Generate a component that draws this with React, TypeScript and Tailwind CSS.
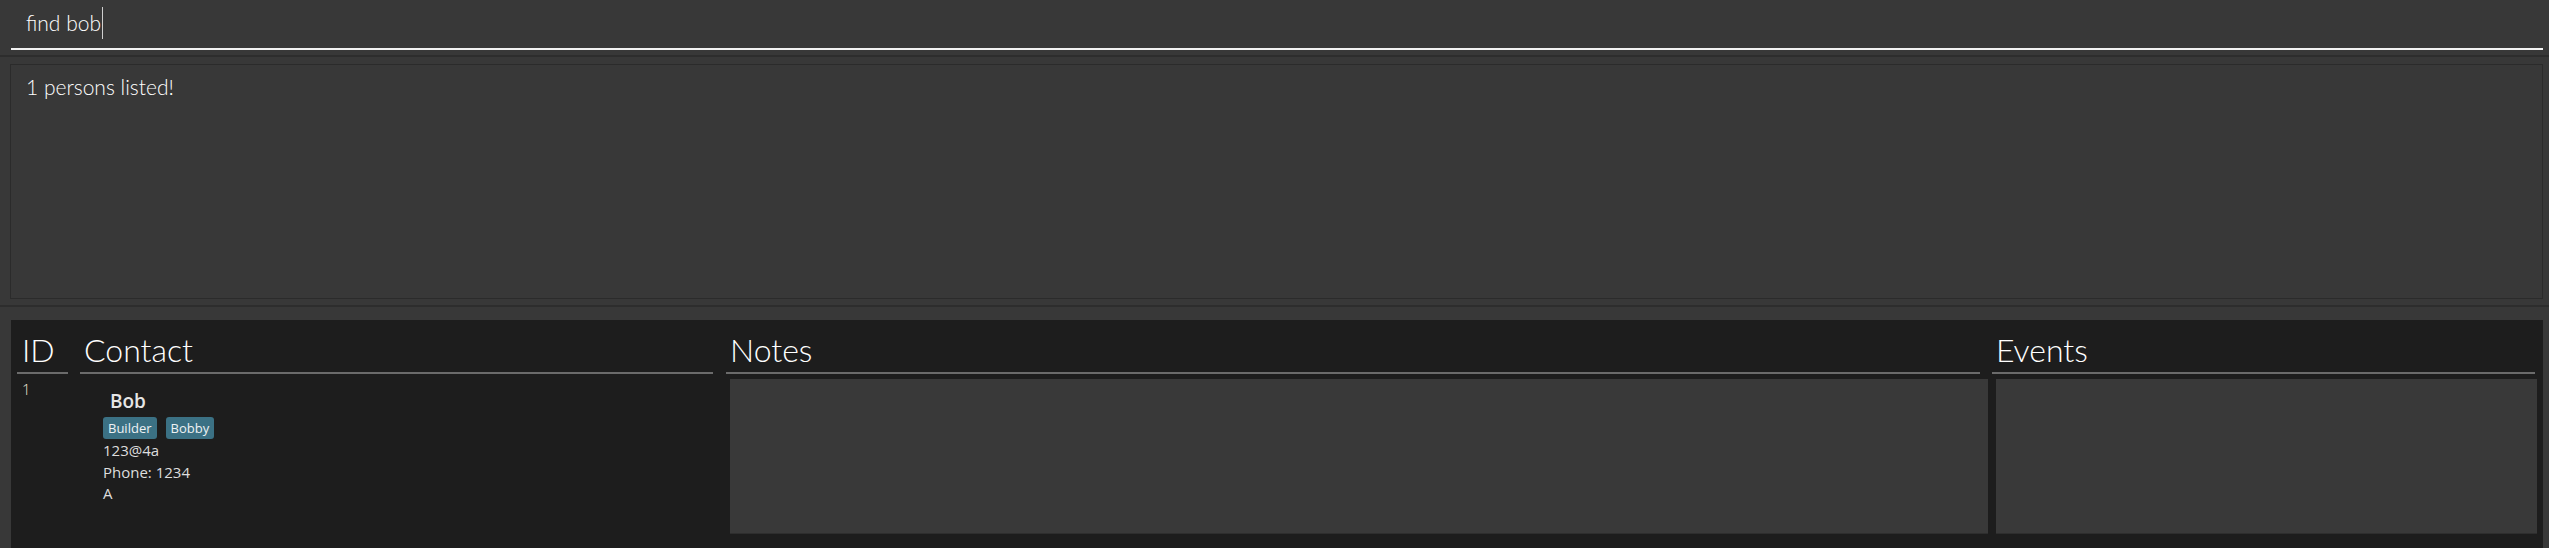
export default function App() {
  const header = "h-[45px] border-b-2 border-[#6b6b6b] leading-[42px] text-[32px] font-light text-white font-['Lato',sans-serif]";
  return (
    <div className="w-[2549px] h-[548px] overflow-hidden bg-[#383838] flex flex-col font-['Open_Sans',sans-serif]">
      {/* command box */}
      <div className="h-[55px] shrink-0 pl-[11px] pr-[6px]">
        <div className="h-[50px] border-b-2 border-[#f2f2f2] pl-[15px] pt-[7px] flex items-start">
          <span className="text-[21px] leading-[32px] font-light text-white font-['Lato',sans-serif]">find bob</span>
          <span className="ml-[1px] w-px h-[32px] bg-[#cfcfcf]" />
        </div>
      </div>
      <div className="h-[2px] shrink-0 bg-[#2d2d2d]" />
      {/* result display */}
      <div className="shrink-0 pt-[7px] pb-[6px] pl-[10px] pr-[6px]">
        <div className="h-[235px] border border-[#2b2b2b] bg-[#383838] pl-[15px] pt-[9px]">
          <div className="text-[21px] leading-[25px] font-light text-white font-['Lato',sans-serif]">1 persons listed!</div>
        </div>
      </div>
      <div className="h-[2px] shrink-0 bg-[#2d2d2d]" />
      {/* list panel */}
      <div className="pt-[13px] pl-[11px] pr-[6px] flex-1 flex flex-col">
        <div className="flex-1 bg-[#1d1d1d] pl-[6px] pt-[9px] flex">
          {/* ID */}
          <div className="w-[51px] shrink-0">
            <div className={header + " pl-[5px]"}>ID</div>
            <div className="pl-[5px] mt-[5px] text-[15px] leading-[20px] font-light text-[#ece4d4]">1</div>
          </div>
          {/* Contact */}
          <div className="w-[633px] shrink-0 ml-[12px]">
            <div className={header + " pl-[4px]"}>Contact</div>
            <div className="pl-[23px] pt-[15px] text-[#dedede]">
              <div className="pl-[7px] text-[19px] leading-[24px] font-semibold text-[#e6e6e6]">Bob</div>
              <div className="mt-[4px] flex gap-[9px]">
                <span className="h-[22px] leading-[22px] px-[5px] rounded-[3px] bg-[#3b7184] text-[13px] text-[#eef2f4]">Builder</span>
                <span className="h-[22px] leading-[22px] px-[5px] rounded-[3px] bg-[#3b7184] text-[13px] text-[#eef2f4]">Bobby</span>
              </div>
              <div className="text-[15px] leading-[22px]">123@4a</div>
              <div className="text-[15px] leading-[22px]">Phone: 1234</div>
              <div className="text-[15px] leading-[21px]">A</div>
            </div>
          </div>
          {/* Notes */}
          <div className="w-[1254px] shrink-0 ml-[13px]">
            <div className={header + " pl-[4px]"}>Notes</div>
            <div className="mt-[5px] ml-[4px] w-[1258px] h-[155px] bg-[#393939] border-b border-[#2e2e2e]" />
          </div>
          {/* Events */}
          <div className="w-[543px] shrink-0 ml-[12px]">
            <div className={header + " pl-[4px]"}>Events</div>
            <div className="mt-[5px] ml-[4px] w-[541px] h-[155px] bg-[#393939] border-b border-[#2e2e2e]" />
          </div>
        </div>
      </div>
    </div>
  );
}
